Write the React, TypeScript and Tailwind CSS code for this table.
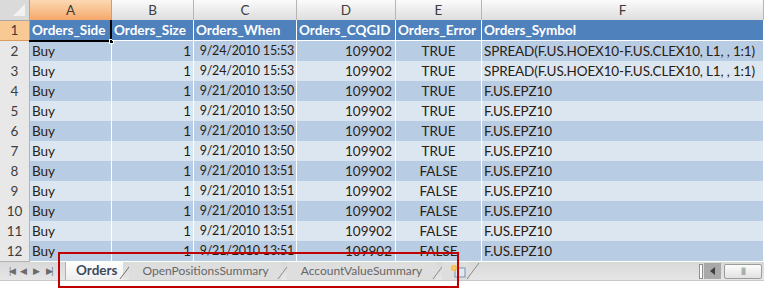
import React from 'react'

const cols = ['A', 'B', 'C', 'D', 'E', 'F']
const headers = ['Orders_Side', 'Orders_Size', 'Orders_When', 'Orders_CQGID', 'Orders_Error', 'Orders_Symbol']
const grid = 'grid grid-cols-[30px_82px_82px_103px_99px_86px_1fr]'

const rows = [
  ['Buy', '1', '9/24/2010 15:53', '109902', 'TRUE', 'SPREAD(F.US.HOEX10-F.US.CLEX10, L1, , 1:1)'],
  ['Buy', '1', '9/24/2010 15:53', '109902', 'TRUE', 'SPREAD(F.US.HOEX10-F.US.CLEX10, L1, , 1:1)'],
  ['Buy', '1', '9/21/2010 13:50', '109902', 'TRUE', 'F.US.EPZ10'],
  ['Buy', '1', '9/21/2010 13:50', '109902', 'TRUE', 'F.US.EPZ10'],
  ['Buy', '1', '9/21/2010 13:50', '109902', 'TRUE', 'F.US.EPZ10'],
  ['Buy', '1', '9/21/2010 13:50', '109902', 'TRUE', 'F.US.EPZ10'],
  ['Buy', '1', '9/21/2010 13:51', '109902', 'FALSE', 'F.US.EPZ10'],
  ['Buy', '1', '9/21/2010 13:51', '109902', 'FALSE', 'F.US.EPZ10'],
  ['Buy', '1', '9/21/2010 13:51', '109902', 'FALSE', 'F.US.EPZ10'],
  ['Buy', '1', '9/21/2010 13:51', '109902', 'FALSE', 'F.US.EPZ10'],
  ['Buy', '1', '9/21/2010 13:51', '109902', 'FALSE', 'F.US.EPZ10'],
]

const align = [
  'justify-start pl-[2px]',
  'justify-end pr-[2px]',
  'justify-end pr-[2px] text-[12.5px] tracking-[-0.2px]',
  'justify-end pr-[3px]',
  'justify-center',
  'justify-start pl-[2px] tracking-[-0.15px]',
]

function Slant({ dark }: { dark?: boolean }) {
  return (
    <svg width="14" height="18" viewBox="0 0 14 18" className="shrink-0 -mx-[4px]">
      <line x1="1" y1="17" x2="13" y2="1" stroke={dark ? '#6f6f6f' : '#8a8a8a'} strokeWidth="1" />
    </svg>
  )
}

export default function App() {
  return (
    <div className="relative w-[764px] h-[296px] bg-white overflow-hidden font-['Lato',sans-serif] text-[13.5px] text-[#2a2112]">
      {/* column header row */}
      <div className={`${grid} h-[20px]`}>
        <div className="bg-[#dadada] border-r border-b border-[#a8a8a8] relative">
          <svg width="14" height="14" className="absolute right-[3px] bottom-[3px]">
            <polygon points="13,1 13,13 1,13" fill="#f2f2f2" />
          </svg>
        </div>
        {cols.map((c, i) => (
          <div
            key={c}
            className={`flex items-center justify-center border-r border-b text-[#3d3d3d] ${
              i === 0
                ? 'bg-gradient-to-b from-[#fbd9b3] to-[#f5a86a] border-[#d99a5e]'
                : 'bg-gradient-to-b from-[#fbfbfb] to-[#dedede] border-[#b5b5b5]'
            }`}
          >
            {c}
          </div>
        ))}
      </div>

      {/* header data row */}
      <div className={`${grid} h-[21px]`}>
        <div className="flex items-center justify-center bg-[#f9c993] border-r border-b border-[#d99a5e] text-[#3d3d3d]">1</div>
        {headers.map((h, i) => (
          <div
            key={h}
            className={`relative flex items-center pl-[2px] bg-[#4f81bd] text-white font-bold border-b border-white ${
              i === 0 ? 'border-r-2 border-r-black' : 'border-r border-r-white'
            }`}
          >
            {h}
            {i === 0 && (
              <>
                <div className="absolute left-[-1px] right-[-2px] bottom-[-2px] h-[2px] bg-black" />
                <div className="absolute right-[-4px] bottom-[-4px] w-[5px] h-[5px] bg-black border border-white" />
              </>
            )}
          </div>
        ))}
      </div>

      {rows.map((r, ri) => (
        <div key={ri} className={`${grid} h-[20px]`}>
          <div className="flex items-center justify-center bg-[#e8e8e8] border-r border-b border-[#b3b3b3] text-[#3d3d3d]">
            {ri + 2}
          </div>
          {r.map((v, ci) => (
            <div
              key={ci}
              className={`flex items-center whitespace-nowrap overflow-hidden border-r border-b border-white ${align[ci]} ${
                ri % 2 === 0 ? 'bg-[#b8cce4]' : 'bg-[#dce6f1]'
              }`}
            >
              {v}
            </div>
          ))}
        </div>
      ))}

      {/* sheet tab bar */}
      <div className="flex items-stretch h-[20px] bg-gradient-to-b from-[#d8d8d8] to-[#e6e6e6] border-t border-[#9a9a9a] border-b border-b-[#c8c8c8]">
        <div className="flex items-center gap-[6px] pl-[9px] w-[66px] text-[#6a6a6a] text-[9px] border-r border-[#b0b0b0]">
          <span className="tracking-[-2px]">|◀</span>
          <span>◀</span>
          <span>▶</span>
          <span className="tracking-[-2px]">▶|</span>
        </div>
        <div className="flex items-center pl-[10px] pr-[6px] bg-gradient-to-b from-[#ffffff] to-[#eeeeee] font-bold text-[#3b4a5c] -mt-px">
          Orders
        </div>
        <Slant dark />
        <div className="flex items-center pl-[13px] pr-[12px] text-[12px] text-[#666] bg-[#dedede]">OpenPositionsSummary</div>
        <Slant />
        <div className="flex items-center px-[14px] text-[12px] text-[#666] bg-[#dedede]">AccountValueSummary</div>
        <Slant />
        <div className="flex items-center pl-[8px] pr-[4px] bg-[#dedede]">
          <svg width="16" height="14" viewBox="0 0 16 14">
            <rect x="5" y="4" width="10" height="9" fill="#dfe8f3" stroke="#7f93ad" />
            <circle cx="4" cy="4" r="3" fill="#f6b63a" />
            <path d="M4 0v8M0 4h8" stroke="#f9d27a" strokeWidth="1" />
          </svg>
        </div>
        <Slant />
        <div className="flex-1" />
        <div className="flex items-center gap-[1px] pr-[2px]">
          <div className="w-[4px] h-[15px] bg-white border border-[#8f8f8f]" />
          <div className="w-[17px] h-[16px] bg-[#a9a9a9] flex items-center justify-center">
            <svg width="6" height="8">
              <polygon points="5,0 5,8 0,4" fill="#3f3f3f" />
            </svg>
          </div>
          <div className="w-[38px] h-[15px] ml-[2px] rounded-[2px] bg-gradient-to-b from-[#fcfcfc] to-[#e2e2e2] border border-[#9c9c9c] flex items-center justify-center text-[8px] text-[#777] tracking-[-1px]">
            ||||
          </div>
        </div>
      </div>

      {/* annotation */}
      <div className="absolute left-[58px] top-[252px] w-[401px] h-[36px] border-2 border-[#c00000]" />
    </div>
  )
}
